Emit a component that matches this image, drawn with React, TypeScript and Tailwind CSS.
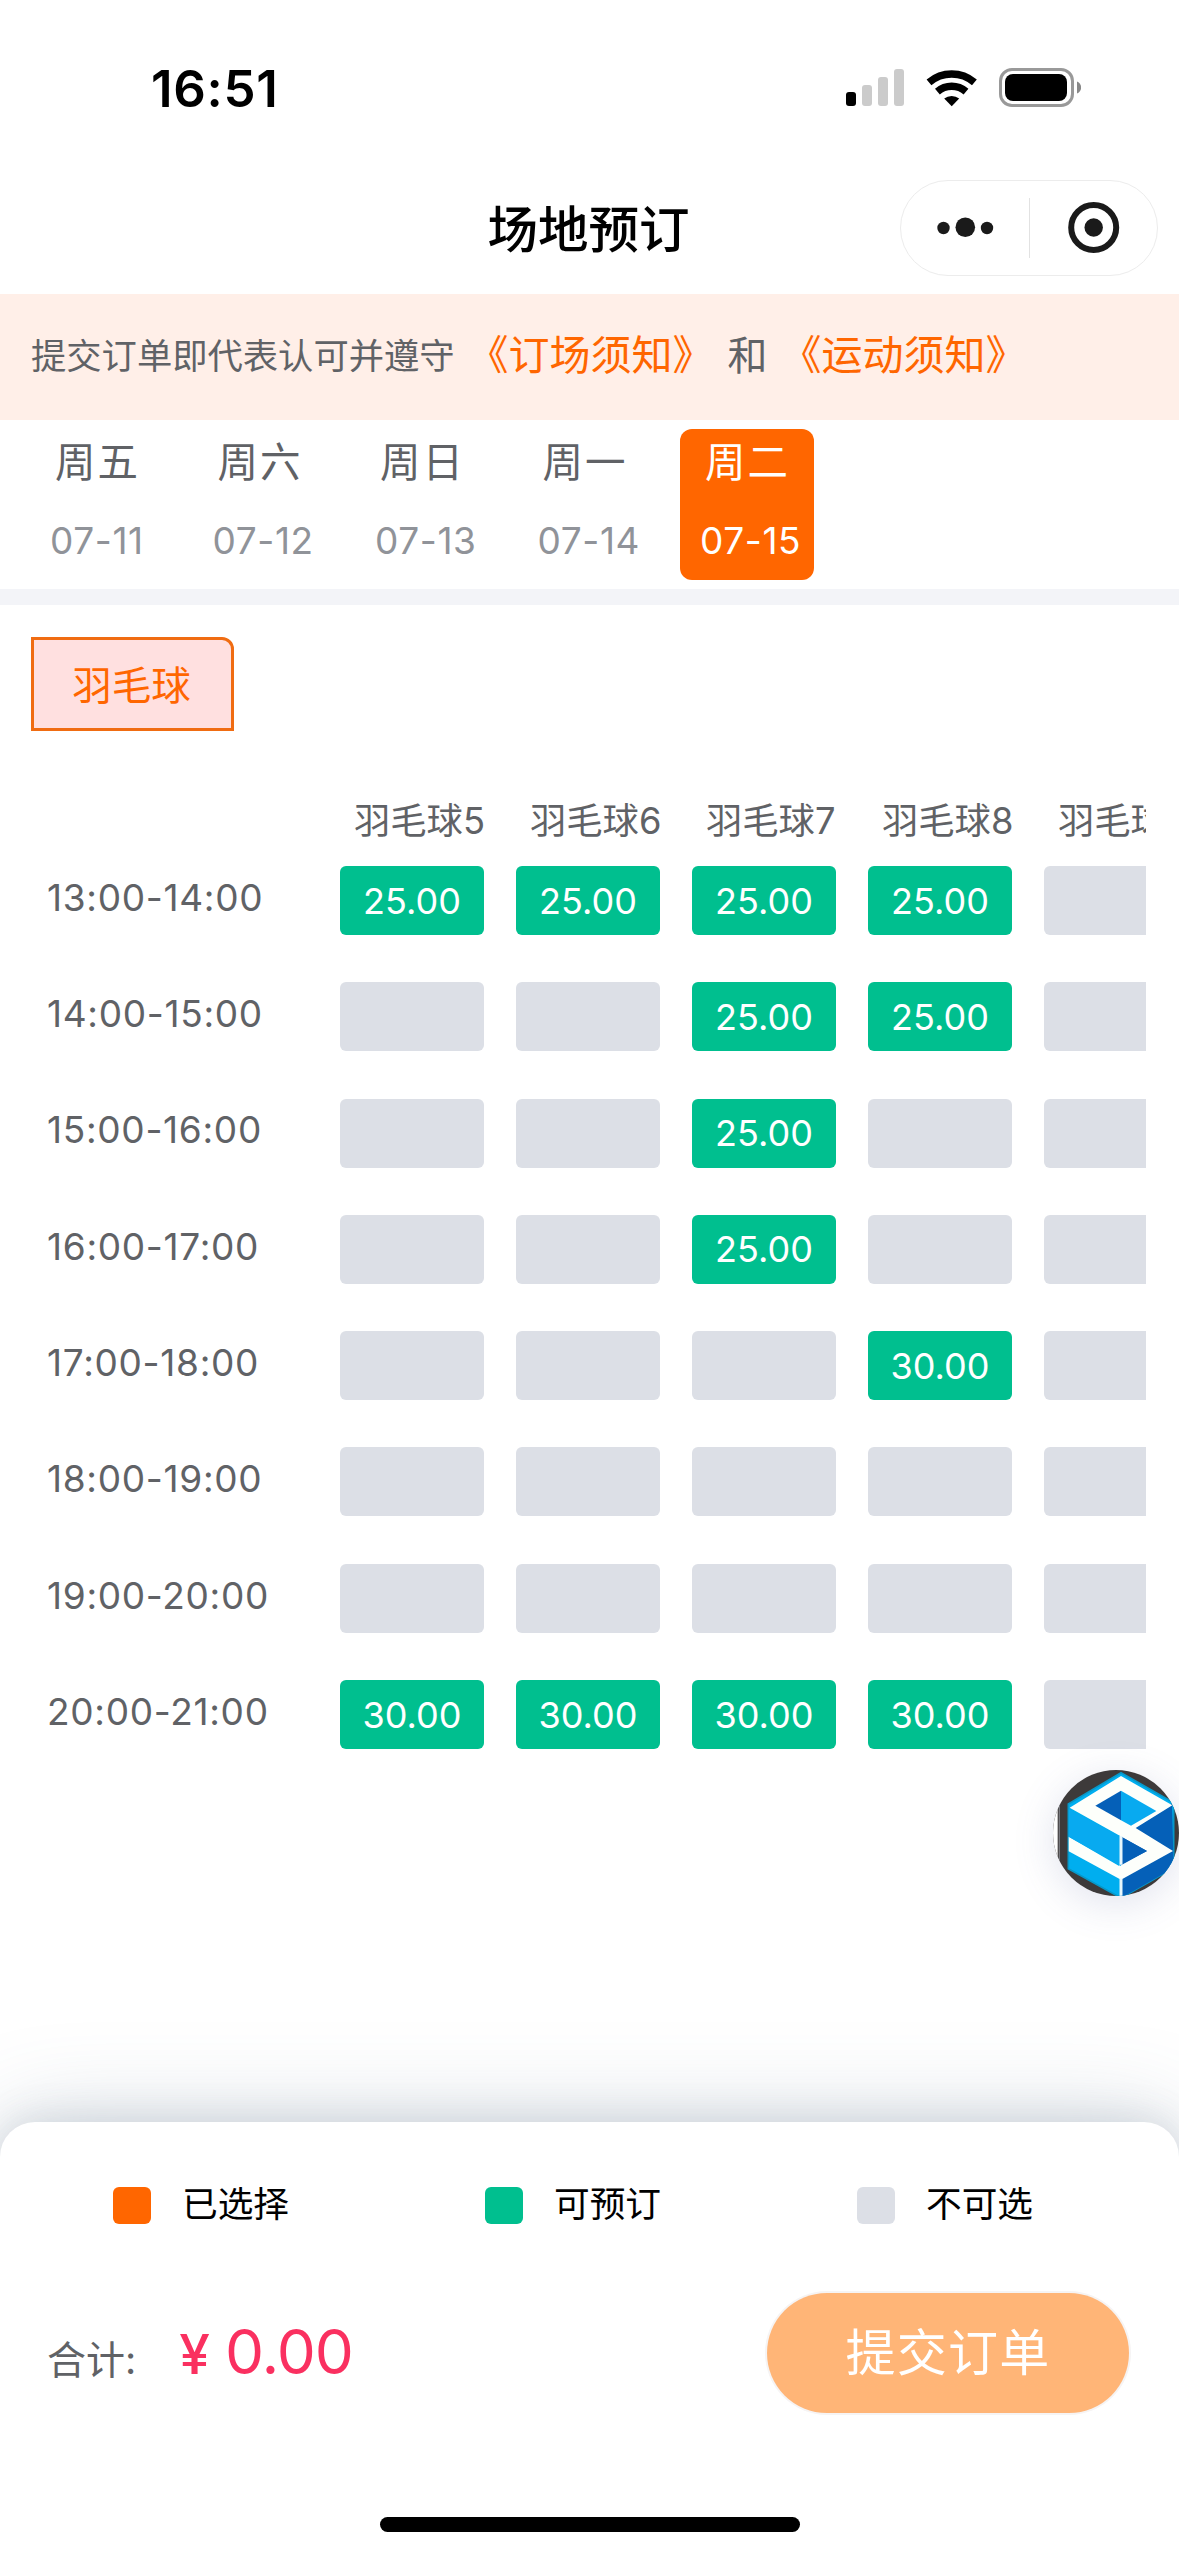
const days = [
  { week: '周五', date: '07-11' },
  { week: '周六', date: '07-12' },
  { week: '周日', date: '07-13' },
  { week: '周一', date: '07-14' },
  { week: '周二', date: '07-15' },
];

const courts = ['羽毛球5', '羽毛球6', '羽毛球7', '羽毛球8', '羽毛球9'];

// null = 不可选
const slots: { time: string; prices: (string | null)[] }[] = [
  { time: '13:00-14:00', prices: ['25.00', '25.00', '25.00', '25.00', null] },
  { time: '14:00-15:00', prices: [null, null, '25.00', '25.00', null] },
  { time: '15:00-16:00', prices: [null, null, '25.00', null, null] },
  { time: '16:00-17:00', prices: [null, null, '25.00', null, null] },
  { time: '17:00-18:00', prices: [null, null, null, '30.00', null] },
  { time: '18:00-19:00', prices: [null, null, null, null, null] },
  { time: '19:00-20:00', prices: [null, null, null, null, null] },
  { time: '20:00-21:00', prices: ['30.00', '30.00', '30.00', '30.00', null] },
];

const legend = [
  { label: '已选择', color: 'bg-[#ff6600]' },
  { label: '可预订', color: 'bg-[#00bf8f]' },
  { label: '不可选', color: 'bg-[#dcdfe6]' },
];

function StatusBar() {
  return (
    <div className="flex h-[174px] items-start justify-between pt-[62px] pr-[98px] pl-[151px]">
      <span className="text-[51px] leading-[53px] font-semibold tracking-[0.700px] text-black">16:51</span>
      <svg width="236" height="40" viewBox="0 0 236 40" className="mt-[6px]">
        <rect x="1" y="24" width="10" height="14" rx="3" />
        <rect x="17" y="17" width="10" height="21" rx="3" fill="#cbcbcb" />
        <rect x="33" y="9" width="10" height="29" rx="3" fill="#cbcbcb" />
        <rect x="49" y="1" width="10" height="37" rx="3" fill="#cbcbcb" />
        <g fill="none" stroke="#000" strokeWidth="7.4">
          <path d="M84 14.4a35 35 0 0 1 45.4 0" />
          <path d="M92.4 23.6a22 22 0 0 1 28.6 0" />
        </g>
        <path d="M99.2 30.6a12 12 0 0 1 15 0l-7.5 7.6z" />
        <rect x="155.5" y="1.5" width="72" height="36" rx="11.5" fill="none" stroke="#999" strokeWidth="3" />
        <rect x="160" y="6" width="62" height="27" rx="8" />
        <path d="M232 13.5c5.500 2 5.500 10 0 12z" fill="#888" />
      </svg>
    </div>
  );
}

function NavBar() {
  return (
    <div className="grid h-[120px] grid-cols-[1fr_auto_1fr] items-start">
      <div />
      <h1 className="mt-[26px] mr-[2px] text-[50.500px] leading-[60px] font-medium text-black">场地预订</h1>
      <div className="mt-[6px] mr-[21px] flex h-[96px] w-[258px] items-center justify-self-end rounded-full border border-[#ececec]">
        <svg width="128" height="60" viewBox="0 0 128 60" fill="#1a1a1a">
          <circle cx="42.500" cy="30" r="6.200" />
          <circle cx="64.300" cy="29.300" r="9.800" />
          <circle cx="86" cy="30" r="6.200" />
        </svg>
        <div className="h-[60px] w-px bg-[#e2e2e2]" />
        <svg width="127" height="60" viewBox="0 0 127 60" fill="#1a1a1a">
          <circle cx="63.700" cy="29.500" r="22.500" fill="none" stroke="#1a1a1a" strokeWidth="6" />
          <circle cx="63.700" cy="29.500" r="9.200" />
        </svg>
      </div>
    </div>
  );
}

function Notice() {
  return (
    <div className="flex h-[126px] items-center bg-[#ffefe8] pl-[31px] whitespace-nowrap text-[#606266]">
      <span className="text-[35.300px]">提交订单即代表认可并遵守</span>
      <span className="ml-[13px] pb-[3px] text-[41px] text-[#ff6600]">《订场须知》</span>
      <span className="ml-[14px] pb-[3px] text-[40px]">和</span>
      <span className="ml-[13px] pb-[3px] text-[41px] text-[#ff6600]">《运动须知》</span>
    </div>
  );
}

function DayPicker({ selected }: { selected: string }) {
  return (
    <div className="flex h-[169px] gap-[28.500px] pt-[9px] pl-[30px]">
      {days.map((day) => {
        const active = day.date === selected;
        return (
          <div
            key={day.date}
            className={`flex h-[151px] w-[134px] flex-col rounded-[12px] ${active ? 'bg-[#ff6600] text-white' : ''}`}
          >
            <span className={`mt-[9px] pl-[25px] text-[40.500px] leading-[50px] tracking-[2px] ${active ? '' : 'text-[#606266]'}`}>
              {day.week}
            </span>
            <span className={`mt-[28px] pl-[20px] text-[37px] leading-[50px] tracking-[0.600px] ${active ? '' : 'text-[#909399]'}`}>
              {day.date}
            </span>
          </div>
        );
      })}
    </div>
  );
}

function SlotTable() {
  return (
    <div className="mt-[63px] mr-[33px] flex text-[#606266]">
      <div className="w-[340px] shrink-0 pt-[72px] pl-[47px]">
        {slots.map((slot) => (
          <div key={slot.time} className="mb-[47.300px] flex h-[69px] items-center pb-[6px] text-[37px] tracking-[0.700px]">
            {slot.time}
          </div>
        ))}
      </div>
      <div className="flex flex-1 gap-[32px] overflow-hidden">
        {courts.map((court, i) => (
          <div key={court} className="w-[144px] shrink-0">
            <div className="flex h-[72px] items-start pl-[14px] text-[36.300px] leading-[54px] whitespace-nowrap">{court}</div>
            {slots.map((slot) => (
              <div
                key={slot.time}
                className={`mb-[47.300px] flex h-[69px] items-center justify-center rounded-[6px] text-[36px] text-white ${
                  slot.prices[i] ? 'bg-[#00bf8f]' : 'bg-[#dcdfe6]'
                }`}
              >
                {slot.prices[i]}
              </div>
            ))}
          </div>
        ))}
      </div>
    </div>
  );
}

function FloatingLogo() {
  return (
    <div className="absolute top-[1770px] right-0 h-[126px] w-[126px] rounded-full shadow-[0_8px_40px_rgba(90,100,160,0.18)]">
      <svg width="126" height="126" viewBox="68 90 378 378">
        <defs>
          <clipPath id="logo-round">
            <circle cx="257" cy="279" r="189" />
          </clipPath>
        </defs>
        <g clipPath="url(#logo-round)">
          <rect x="68" y="90" width="378" height="378" fill="#3d3a3a" />
          <rect x="68" y="90" width="14" height="378" fill="#fff" />
          <rect x="85" y="90" width="4" height="378" fill="#77777c" />
          <path d="M272 98 430 188V384L272 474 114 386V192Z" fill="#00aeef" stroke="#0798c8" strokeWidth="5" />
          <path d="M425 192 430 384 272 474V260Z" fill="#0560b8" />
          {/* white ribbon */}
          <path d="M272 108 426 196 316 264 428 333 272 419 115 334V290L265 377 350 333 118 203Z" fill="#fdfffb" />
          <path d="M115 208 272 291V378L115 290Z" fill="#08aaf0" />
          <path d="M272 290 350 333 272 376Z" fill="#0560b8" />
          <path d="M272 152V241L195 197Z" fill="#0560b8" />
          <path d="M272 152 378 213 302 257 272 241Z" fill="#08aaf0" />
          <path d="M272 288V374M272 416V468" stroke="#e8f7fc" strokeWidth="9" />
        </g>
      </svg>
    </div>
  );
}

function BottomPanel() {
  return (
    <div className="relative mt-auto flex h-[434px] flex-col rounded-t-[35px] bg-white shadow-[0_0_96px_rgba(80,105,130,0.26),0_0_40px_rgba(80,100,120,0.18)]">
      <div className="flex pt-[61px] pl-[113px]">
        {legend.map((item) => (
          <div key={item.label} className="flex h-[45px] w-[372px] shrink-0 items-center">
            <div className={`h-[37px] w-[38px] rounded-[6px] ${item.color}`} />
            <span className="ml-[31px] pb-[3px] text-[35.700px] leading-[42px] text-black">{item.label}</span>
          </div>
        ))}
      </div>
      <div className="mt-[65px] flex h-[120px] items-center justify-between pr-[50px] pl-[47px]">
        <div className="flex items-baseline pb-[3px]">
          <span className="text-[39px] text-[#606266]">合计:</span>
          <span className="ml-[43px] text-[55px] font-medium text-[#fa3060]">¥</span>
          <span className="ml-[15px] text-[62px] tracking-[-1px] text-[#fa3060]">0.00</span>
        </div>
        <button className="h-[120px] w-[362px] rounded-full bg-[#ffb577] text-[50px] tracking-[1.200px] text-white shadow-[0_0_0_2px_#f6f4f4]">
          提交订单
        </button>
      </div>
      <div className="mx-auto mt-auto mb-[24px] h-[15px] w-[420px] rounded-full bg-black" />
    </div>
  );
}

export default function App() {
  return (
    <div className="relative flex h-[2556px] w-[1179px] flex-col overflow-hidden bg-white font-[Inter,'Noto_Sans_CJK_SC',sans-serif]">
      <StatusBar />
      <NavBar />
      <Notice />
      <DayPicker selected="07-15" />
      <div className="h-[16px] bg-[#f3f4f8]" />
      <div className="mt-[32px] ml-[31px] flex h-[94px] w-[203px] items-center justify-center rounded-tr-[12px] border-[3px] border-[#f06c12] bg-[#ffe0e0] pt-[5px] pr-[2px] text-[39.500px] text-[#ff6600]">
        羽毛球
      </div>
      <SlotTable />
      <FloatingLogo />
      <BottomPanel />
    </div>
  );
}
